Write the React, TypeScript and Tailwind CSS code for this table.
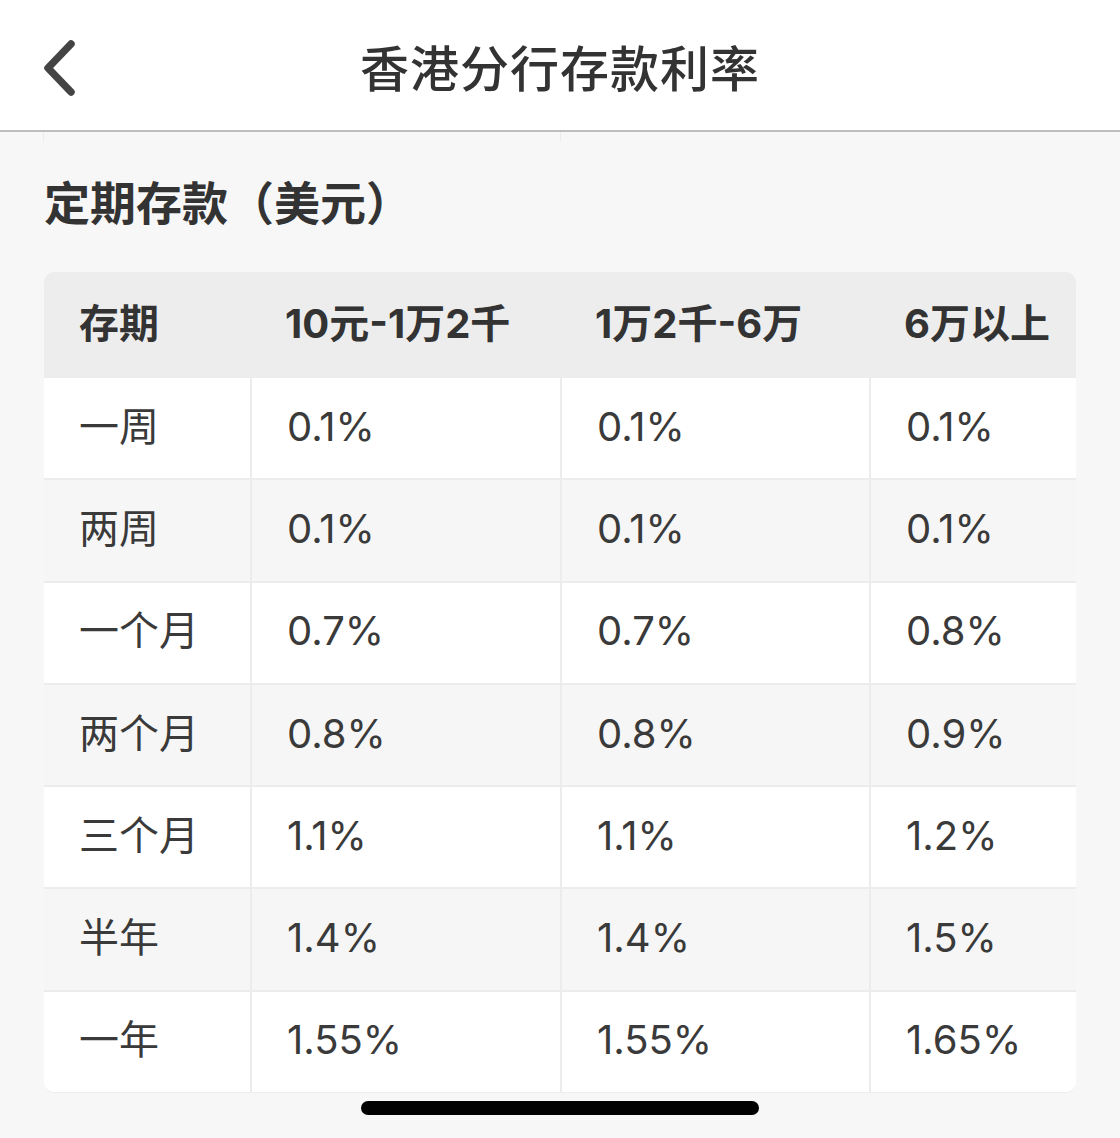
const columns = ["存期", "10元-1万2千", "1万2千-6万", "6万以上"];

const rows = [
  ["一周", "0.1%", "0.1%", "0.1%"],
  ["两周", "0.1%", "0.1%", "0.1%"],
  ["一个月", "0.7%", "0.7%", "0.8%"],
  ["两个月", "0.8%", "0.8%", "0.9%"],
  ["三个月", "1.1%", "1.1%", "1.2%"],
  ["半年", "1.4%", "1.4%", "1.5%"],
  ["一年", "1.55%", "1.55%", "1.65%"],
];

function BackIcon() {
  return (
    <svg width="40" height="60" viewBox="0 0 40 60" fill="none">
      <path
        d="M30 5 L7 29 L30 53"
        stroke="#444"
        strokeWidth="7.5"
        strokeLinecap="round"
        strokeLinejoin="round"
      />
    </svg>
  );
}

export default function App() {
  return (
    <div className="min-h-[1138px] w-full bg-[#f7f7f7] font-['Inter','Noto_Sans_CJK_SC',sans-serif] text-[#333]">
      <header className="grid h-[132px] grid-cols-[1fr_auto_1fr] items-center border-b-2 border-[#bdbdbd] bg-white">
        <div className="flex items-center pl-[41px] pt-[8px]">
          <BackIcon />
        </div>
        <h1 className="pt-[8px] text-[49px] font-medium leading-none tracking-[1px] text-[#333]">
          香港分行存款利率
        </h1>
        <div />
      </header>

      {/* edge of the table scrolled under the header */}
      <div className="ml-[43px] h-[10px] w-[518px] border-x border-[#ececec]" />

      <h2 className="ml-[44px] mt-[31px] h-[60px] text-[46px] font-bold leading-[60px] text-[#333]">
        定期存款（美元）
      </h2>

      <div className="mx-[44px] mt-[39px] w-[1032px] overflow-hidden rounded-[10px] border-b border-[#ededed]">
        <div className="grid h-[104px] grid-cols-[206px_310px_309px_1fr] items-center bg-[#ededed]">
          {columns.map((c) => (
            <div key={c} className="pl-[35px] text-[40px] font-bold text-[#333]">
              {c}
            </div>
          ))}
        </div>
        {rows.map((r, i) => (
          <div
            key={r[0]}
            className={
              "grid h-[102.3px] grid-cols-[206px_310px_309px_1fr] border-t-2 border-[#ececec] " +
              (i % 2 === 0 ? "bg-white" : "bg-[#f6f6f6]")
            }
          >
            {r.map((v, j) => (
              <div
                key={j}
                className={
                  "flex items-center pb-[3px] pl-[35px] text-[40px] font-normal text-[#3a3a3a] " +
                  (j > 0 ? "border-l-2 border-[#ececec]" : "")
                }
              >
                {v}
              </div>
            ))}
          </div>
        ))}
      </div>

      <div className="mx-auto mt-[8px] h-[14px] w-[398px] rounded-full bg-black" />
    </div>
  );
}
